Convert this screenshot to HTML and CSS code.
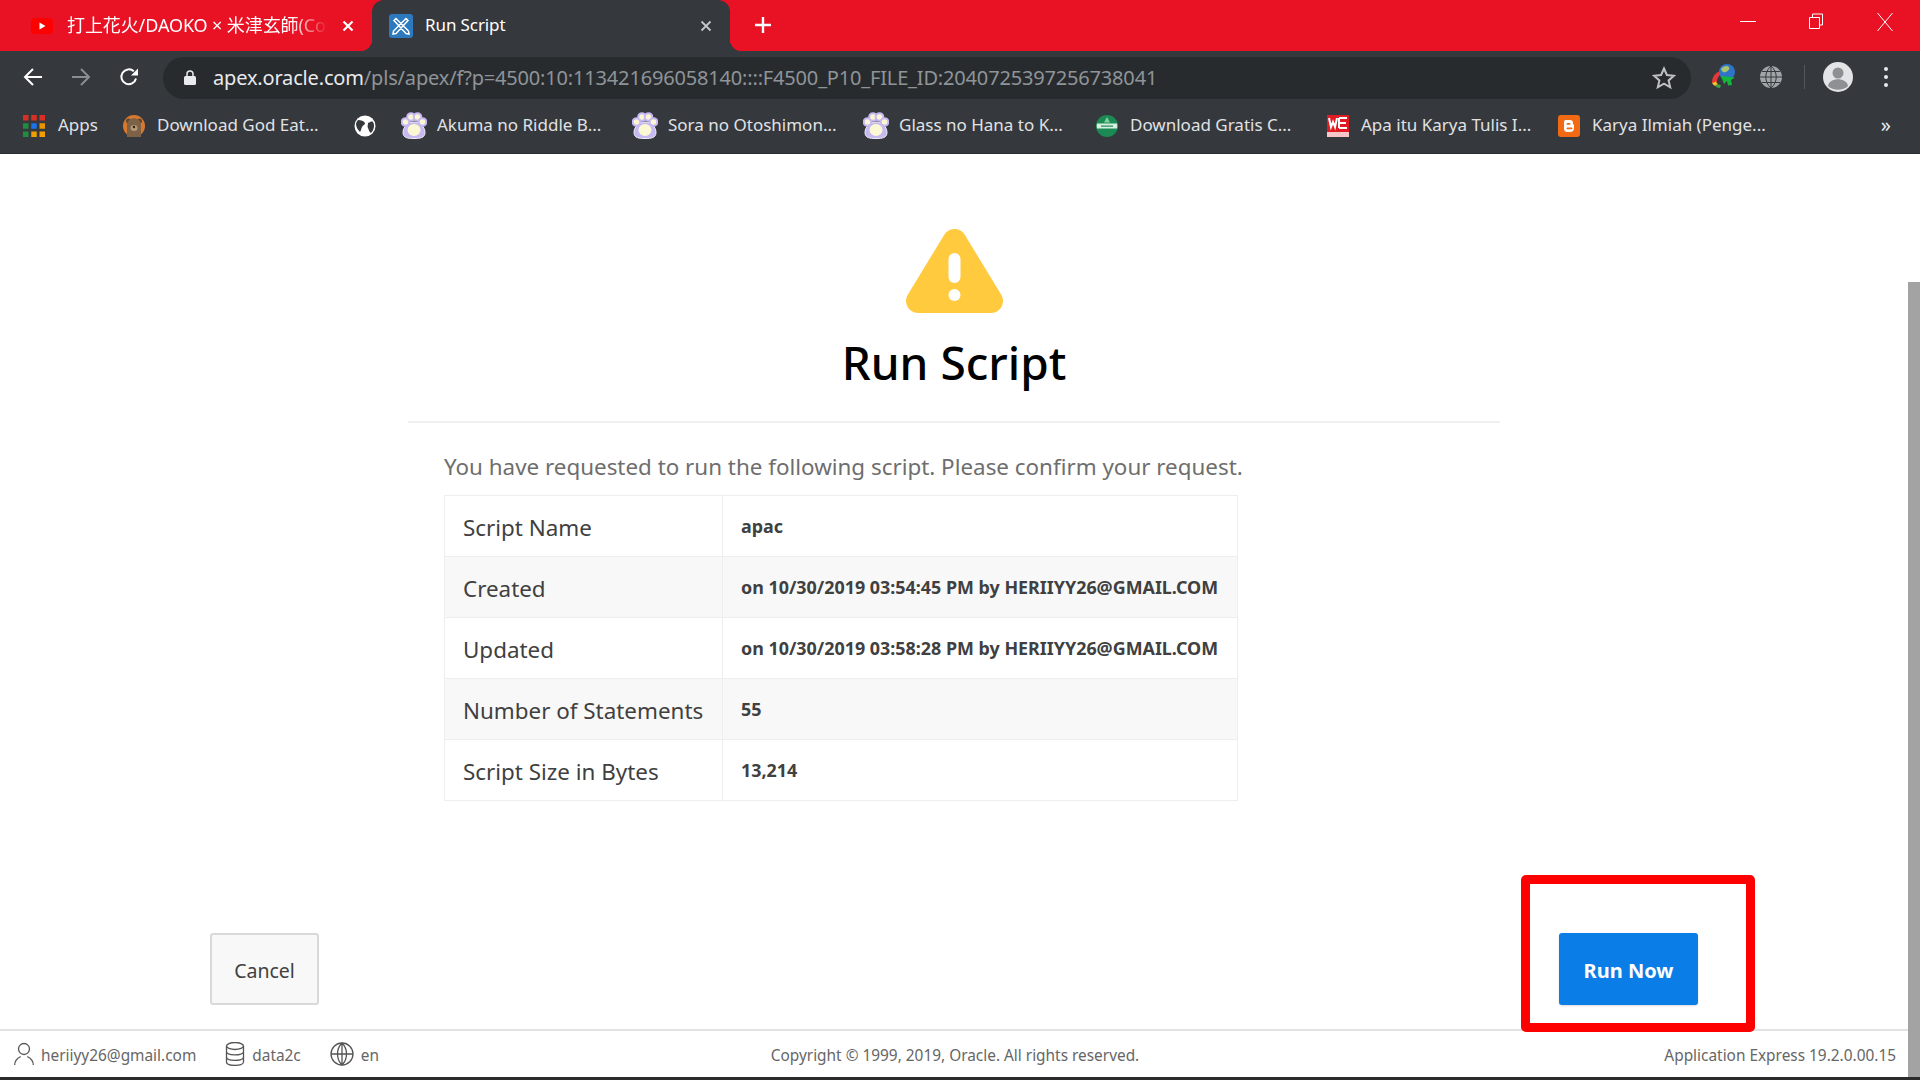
FILE: index.html
```html
<!DOCTYPE html>
<html lang="en">
<head>
<meta charset="utf-8">
<title>Run Script</title>
<link rel="stylesheet" href="styles.css">
</head>
<body>
<div class="window">
  <header class="tabbar">
    <div class="tab tab-idle">
      <svg class="fav-yt" viewBox="0 0 22 16"><rect width="22" height="16" rx="4" fill="#f00"/><path d="M8.500 4.500 14.500 8 8.500 11.500z" fill="#fff"/></svg>
      <span class="tab-title tab-title-fade">打上花火/DAOKO × 米津玄師(Cover)</span>
      <svg class="tab-x" viewBox="0 0 12 12"><path d="M1.500 1.500 10.500 10.500M10.500 1.500 1.500 10.500" stroke="#fff" stroke-width="2.200"/></svg>
    </div>
    <div class="tab tab-active">
      <svg class="fav-apex" viewBox="0 0 24 24"><rect width="24" height="24" rx="3" fill="#2c79bd"/><path d="M5 6.500 7 4.500 19.500 17 20 20 17 19.500zM19 6.500 17 4.500 4.500 17 4 20 7 19.500z" fill="none" stroke="#fff" stroke-width="1.500"/></svg>
      <span class="tab-title tab-title-small">Run Script</span>
      <svg class="tab-x" viewBox="0 0 12 12"><path d="M1.500 1.500 10.500 10.500M10.500 1.500 1.500 10.500" stroke="#c4c7ca" stroke-width="1.800"/></svg>
    </div>
    <svg class="new-tab" viewBox="0 0 18 18"><path d="M9 1v16M1 9h16" stroke="#fff" stroke-width="2.400"/></svg>
    <div class="win-controls">
      <svg class="win-min" viewBox="0 0 16 16"><path d="M0 8.500h16" stroke="#fff"/></svg>
      <svg class="win-max" viewBox="0 0 16 16"><path d="M1.500 4.500h10v11h-10zM4.500 4.500v-3.500h10v11h-3" fill="none" stroke="#fff"/></svg>
      <svg class="win-close" viewBox="0 0 16 20"><path d="M.5 1 15.500 19M15.500 1 .5 19" stroke="#fff" fill="none"/></svg>
    </div>
  </header>

  <nav class="toolbar">
    <svg class="nav-icon" viewBox="0 0 20 20"><path d="M19 10H2M10 2 2 10l8 8" fill="none" stroke="#fff" stroke-width="2"/></svg>
    <svg class="nav-icon" viewBox="0 0 20 20"><path d="M1 10h17M10 2l8 8-8 8" fill="none" stroke="#8b8e91" stroke-width="2"/></svg>
    <svg class="nav-icon" viewBox="0 0 20 20"><path d="M17 11.500A7.400 7.400 0 1 1 14.800 4.300" fill="none" stroke="#fff" stroke-width="2"/><path d="M12 8.500h7v-7z" fill="#fff"/></svg>
    <div class="omnibox">
      <svg class="lock" viewBox="0 0 12 15"><path d="M3 6V4a3 3 0 0 1 6 0v2" fill="none" stroke="#e8eaed" stroke-width="1.500"/><rect y="6" width="12" height="9" rx="1.500" fill="#e8eaed"/></svg>
      <span class="url"><span class="url-host">apex.oracle.com</span>/pls/apex/f?p=4500:10:113421696058140::::F4500_P10_FILE_ID:2040725397256738041</span>
      <svg class="star" viewBox="0 0 24 24"><path d="M12 2.500l2.900 6.500 7 .7-5.300 4.700 1.600 6.900-6.200-3.600-6.200 3.600 1.600-6.900L2.100 9.700l7-.7z" fill="none" stroke="#bfc1c3" stroke-width="2"/></svg>
    </div>
    <svg class="ext-idm" viewBox="0 0 26 26">
      <path d="M1 19C1 12 5 8 10 7l1 3c-3 1-5 4-5 8z" fill="#e53935"/>
      <path d="M4 22C2.500 21 1.500 20 1 19l4-1.500c.4 1 1 2 2 2.500z" fill="#fbc02d"/>
      <path d="M9 24c-2 0-4-1-5-2l3-2c1 .8 2 1 3 1z" fill="#43a047"/>
      <circle cx="16" cy="8" r="8" fill="#2f74c9"/>
      <path d="M10 5c2-3 6-4 8-2 1 2-1 4-3 5s-4 0-5-3z" fill="#a9c46c"/>
      <path d="M10 12 24 13.500 20 16l1 5-4 .5-1-4.500-3 3z" fill="#16b53c"/>
    </svg>
    <svg class="ext-globe" viewBox="0 0 24 24"><circle cx="12" cy="12" r="11" fill="#a2a5a8"/><path d="M1 12h22M3 6.500h18M3 17.500h18M12 1v22M12 1c-7 6-7 16 0 22M12 1c7 6 7 16 0 22" fill="none" stroke="#35383c" stroke-width="1"/></svg>
    <span class="tool-sep"></span>
    <svg class="avatar" viewBox="0 0 30 30"><circle cx="15" cy="15" r="15" fill="#e3e4e5"/><circle cx="15" cy="11" r="5.500" fill="#8e9093"/><path d="M5 24c1-9 19-9 20 0-5 5-15 5-20 0z" fill="#8e9093"/></svg>
    <svg class="kebab" viewBox="0 0 6 22"><circle cx="3" cy="3" r="2" fill="#e8eaed"/><circle cx="3" cy="11" r="2" fill="#e8eaed"/><circle cx="3" cy="19" r="2" fill="#e8eaed"/></svg>
  </nav>

  <nav class="bookmarks">
    <div class="bm bm-apps">
      <svg class="bm-icon" viewBox="0 0 20 20"><g fill="#d93025"><rect width="5" height="5"/><rect x="7.500" width="5" height="5"/><rect x="15" width="5" height="5"/></g><rect y="7.500" width="5" height="5" fill="#1e8e3e"/><rect x="7.500" y="7.500" width="5" height="5" fill="#1a73e8"/><rect x="15" y="7.500" width="5" height="5" fill="#e69500"/><rect y="15" width="5" height="5" fill="#1e8e3e"/><rect x="7.500" y="15" width="5" height="5" fill="#f09d00"/><rect x="15" y="15" width="5" height="5" fill="#f09d00"/></svg>
      <span>Apps</span>
    </div>
    <div class="bm">
      <svg class="bm-icon" viewBox="0 0 22 22"><circle cx="11" cy="11" r="11" fill="#d9782f"/><circle cx="5.500" cy="6" r="2.500" fill="#5d4632"/><circle cx="16.500" cy="6" r="2.500" fill="#5d4632"/><path d="M4 10c0-9 14-9 14 0v12H4z" fill="#7d6248"/><ellipse cx="11" cy="13" rx="3.500" ry="3" fill="#b69a78"/><circle cx="11" cy="12" r="1.200" fill="#2c2118"/></svg>
      <span>Download God Eat...</span>
    </div>
    <div class="bm bm-globe">
      <svg class="bm-icon" viewBox="0 0 22 22"><circle cx="11" cy="11" r="10.500" fill="#fff"/><path d="M4 5c3 0 6 1 7 3 0 2-2 2-3 4s-1 4-2 5c-2-2-4-5-4-8 0-1 1-3 2-4zM14 8c2-1 4-2 5-1 2 3 1 8-2 11-2-1-2-3-3-5-1-1 0-3 0-5z" fill="#35383c"/></svg>
    </div>
    <div class="bm bm-paw">
      <svg class="bm-icon" viewBox="0 0 26 27"><use href="#paw"/></svg>
      <span>Akuma no Riddle B...</span>
    </div>
    <div class="bm bm-paw">
      <svg class="bm-icon" viewBox="0 0 26 27"><use href="#paw"/></svg>
      <span>Sora no Otoshimon...</span>
    </div>
    <div class="bm bm-paw">
      <svg class="bm-icon" viewBox="0 0 26 27"><use href="#paw"/></svg>
      <span>Glass no Hana to K...</span>
    </div>
    <div class="bm">
      <svg class="bm-icon" viewBox="0 0 22 22"><circle cx="11" cy="11" r="11" fill="#1b8a55"/><path d="M1 8.500h20a11 11 0 0 1 0 5H1a11 11 0 0 1 0-5z" fill="#d8efe0"/><path d="M5 10.500h12v1.200H5z" fill="#1b8a55"/><path d="M11 2l3 5.500H8z" fill="#7fd09f"/></svg>
      <span>Download Gratis C...</span>
    </div>
    <div class="bm">
      <svg class="bm-icon" viewBox="0 0 22 22"><rect width="22" height="22" fill="#e01b24"/><path d="M2 3l2 9 2-5 2 5 2-9M12 3h8M12 8h7M12 13h8M12 3v10" fill="none" stroke="#fff" stroke-width="2"/><rect y="17" width="22" height="5" fill="#f6c6c8"/></svg>
      <span>Apa itu Karya Tulis I...</span>
    </div>
    <div class="bm">
      <svg class="bm-icon" viewBox="0 0 22 22"><rect width="22" height="22" rx="3" fill="#f26a13"/><path d="M7.500 5h4.500a3 3 0 0 1 3 3v1l1 1v3a4 4 0 0 1-4 4H9.500a3.500 3.500 0 0 1-3.500-3.500V7a2 2 0 0 1 1.500-2z" fill="#fff"/><rect x="8.500" y="8" width="4" height="1.800" rx=".9" fill="#f26a13"/><rect x="8.500" y="12.500" width="6" height="1.800" rx=".9" fill="#f26a13"/></svg>
      <span>Karya Ilmiah (Penge...</span>
    </div>
    <span class="bm-more">»</span>
  </nav>

  <svg class="defs" width="0" height="0"><defs><g id="paw">
    <path d="M13 10c6 0 11 5 11 10.500S19 26.500 13 26.500 2 26 2 20.500 7 10 13 10z" fill="#c6b8f0" stroke="#f4f1fb" stroke-width="1"/>
    <circle cx="4.500" cy="10" r="3.800" fill="#fbf6d3" stroke="#c6b8f0" stroke-width="2"/>
    <circle cx="10" cy="5" r="3.800" fill="#fbf6d3" stroke="#c6b8f0" stroke-width="2"/>
    <circle cx="16.500" cy="5" r="3.800" fill="#fbf6d3" stroke="#c6b8f0" stroke-width="2"/>
    <circle cx="21.500" cy="10" r="3.800" fill="#fbf6d3" stroke="#c6b8f0" stroke-width="2"/>
    <ellipse cx="13" cy="18" rx="6.500" ry="6" fill="#fdf8d4"/>
  </g></defs></svg>

  <div class="page">
    <div class="content">
      <main class="main">
        <div class="hero">
          <svg class="warn" viewBox="0 0 97 84"><path d="M48.500 12 12 72H85z" fill="#ffca3e" stroke="#ffca3e" stroke-width="24" stroke-linejoin="round"/><rect x="42.500" y="24" width="12" height="30" rx="6" fill="#fff"/><circle cx="48.500" cy="66" r="6" fill="#fff"/></svg>
          <h1 class="title">Run Script</h1>
        </div>
        <div class="body">
          <p class="intro">You have requested to run the following script. Please confirm your request.</p>
          <table class="info">
            <tr><th>Script Name</th><td>apac</td></tr>
            <tr class="alt"><th>Created</th><td>on 10/30/2019 03:54:45 PM by HERIIYY26@GMAIL.COM</td></tr>
            <tr><th>Updated</th><td>on 10/30/2019 03:58:28 PM by HERIIYY26@GMAIL.COM</td></tr>
            <tr class="alt"><th>Number of Statements</th><td>55</td></tr>
            <tr><th>Script Size in Bytes</th><td>13,214</td></tr>
          </table>
        </div>
        <div class="actions">
          <button class="btn btn-cancel">Cancel</button>
          <div class="run-wrap">
            <button class="btn btn-run">Run Now</button>
            <span class="highlight"></span>
          </div>
        </div>
      </main>
      <footer class="footer">
        <div class="foot-left">
          <span class="foot-item"><svg class="foot-icon" viewBox="0 0 20 24"><circle cx="10" cy="7" r="5.500" fill="none" stroke="#555" stroke-width="1.300"/><path d="M.7 23c0-5 3-7 6-8.500M19.300 23c0-5-3-7-6-8.500" fill="none" stroke="#555" stroke-width="1.300"/></svg>heriiyy26@gmail.com</span>
          <span class="foot-item"><svg class="foot-icon" viewBox="0 0 20 24"><ellipse cx="10" cy="4" rx="8.500" ry="3.500" fill="none" stroke="#555" stroke-width="1.300"/><path d="M1.500 4v16c0 4.500 17 4.500 17 0V4M1.500 9.500c0 4.500 17 4.500 17 0M1.500 15c0 4.500 17 4.500 17 0" fill="none" stroke="#555" stroke-width="1.300"/></svg>data2c</span>
          <span class="foot-item"><svg class="foot-icon foot-globe" viewBox="0 0 24 24"><circle cx="12" cy="12" r="11" fill="none" stroke="#555" stroke-width="1.300"/><path d="M1 12h22M12 1c-6 6-6 16 0 22M12 1c6 6 6 16 0 22M12 1v22" fill="none" stroke="#555" stroke-width="1.300"/></svg>en</span>
        </div>
        <div class="foot-center">Copyright © 1999, 2019, Oracle. All rights reserved.</div>
        <div class="foot-right">Application Express 19.2.0.00.15</div>
      </footer>
    </div>
    <div class="scrolltrack"><div class="scrollthumb"></div></div>
  </div>
  <div class="taskstrip"></div>
</div>
</body>
</html>
```

FILE: styles.css
```css
* { box-sizing: border-box; }
html, body { margin: 0; height: 100%; }
body { font-family: "Noto Sans", "Open Sans", "Noto Sans CJK JP", sans-serif; overflow: hidden; background: #fff; }
.window { height: 1080px; display: flex; flex-direction: column; }

/* tab strip */
.tabbar { height: 51px; flex: none; background: #e91124; display: flex; align-items: stretch; color: #fff; }
.tab { display: flex; align-items: center; font-size: 18px; position: relative; }
.tab-idle { width: 372px; padding-left: 31px; }
.tab-active { width: 358px; padding-left: 17px; background: #35383c; border-radius: 12px 12px 0 0; }
.tab-active::before, .tab-active::after { content: ""; position: absolute; bottom: 0; width: 12px; height: 12px; }
.tab-active::before { left: -12px; background: radial-gradient(circle at 0 0, transparent 12px, #35383c 12.5px); }
.tab-active::after { right: -12px; background: radial-gradient(circle at 100% 0, transparent 12px, #35383c 12.5px); }
.fav-yt { width: 22px; height: 16px; flex: none; margin-right: 14px; }
.fav-apex { width: 24px; height: 24px; flex: none; margin-right: 12px; }
.tab-title { flex: 1; white-space: nowrap; overflow: hidden; letter-spacing: -.1px; margin-top: -3px; }
.tab-title-small { font-size: 17px; }
.tab-title-fade { -webkit-mask-image: linear-gradient(90deg, #000 86%, transparent 100%); mask-image: linear-gradient(90deg, #000 86%, transparent 100%); }
.tab-x { width: 12px; height: 12px; flex: none; margin: 0 18px 0 14px; }
.new-tab { width: 18px; height: 18px; align-self: center; margin-left: 24px; margin-top: -1px; }
.win-controls { margin-left: auto; display: flex; align-items: flex-start; gap: 52px; padding: 13px 27px 0 0; }
.win-controls svg { width: 16px; height: 16px; display: block; }
.win-controls .win-close { height: 20px; margin-top: -1px; margin-left: 1px; }

/* toolbar */
.toolbar { height: 51px; flex: none; background: #35383c; display: flex; align-items: center; padding: 0 0 0 23px; }
.nav-icon { width: 20px; height: 20px; margin-right: 28px; flex: none; }
.nav-icon:nth-child(3) { margin-right: 24px; }
.omnibox { width: 1528px; height: 42px; margin-top: 5px; background: #282b2e; border-radius: 21px; display: flex; align-items: center; padding: 0 15px 0 21px; margin-bottom: 3px; }
.lock { width: 12px; height: 15px; flex: none; margin-right: 17px; }
.url { flex: 1; font-size: 20px; letter-spacing: -.17px; color: #8f9499; white-space: nowrap; overflow: hidden; }
.url-host { color: #e8eaed; }
.star { width: 24px; height: 24px; flex: none; }
.ext-idm { width: 26px; height: 26px; flex: none; margin-left: 20px; }
.ext-globe { width: 24px; height: 24px; flex: none; margin-left: 22px; }
.tool-sep { width: 1px; height: 24px; background: #55585b; margin-left: 21px; flex: none; }
.avatar { width: 30px; height: 30px; flex: none; margin-left: 18px; }
.kebab { width: 6px; height: 22px; flex: none; margin-left: 30px; }

/* bookmarks */
.bookmarks { height: 52px; flex: none; background: #35383c; border-bottom: 1px solid #2a2c2f; display: flex; align-items: center; padding: 0 0 4px 23px; font-size: 17px; color: #e0e2e5; }
.bm { width: 231px; flex: none; display: flex; align-items: center; gap: 12px; white-space: nowrap; }
.bm span { margin-top: -2px; }
.bm-apps { width: 100px; gap: 13px; }
.bm-globe { width: 49px; }
.bm-paw { gap: 10px; }
.bm-icon { width: 22px; height: 24px; flex: none; display: block; }
.bm-paw .bm-icon { width: 26px; height: 27px; margin-left: -2px; }
.bm-more { margin-left: auto; margin-right: 29px; color: #e8eaed; font-size: 20px; margin-top: -3px; }
.defs { position: absolute; }

/* page */
.page { flex: 1; min-height: 0; display: flex; }
.content { flex: 1; min-width: 0; display: flex; flex-direction: column; }
.main { flex: 1; min-height: 0; display: flex; flex-direction: column; }
.hero { width: 1092px; margin: 0 auto; padding-top: 75px; height: 269px; border-bottom: 2px solid #f0f0f0; display: flex; flex-direction: column; align-items: center; }
.warn { width: 97px; height: 84px; flex: none; }
.title { margin: 17px 0 0; font-size: 46px; line-height: 64px; font-weight: 500; color: #000; }
.body { width: 1092px; margin: 0 auto; padding: 26px 36px 0; }
.intro { margin: 0 0 10px; font-size: 22.400px; line-height: 36px; color: #6e6e6e; }
.info { width: 794px; border-collapse: collapse; table-layout: fixed; }
.info th, .info td { height: 61px; border: 1px solid #eee; padding: 0 18px; text-align: left; vertical-align: middle; white-space: nowrap; }
.info th { width: 278px; font-weight: 400; font-size: 22.400px; color: #404040; padding-top: 2px; }
.info td { font-weight: 700; font-size: 17.900px; color: #404040; }
.info .alt th, .info .alt td { background: #f8f8f8; }
.actions { margin-top: auto; display: flex; justify-content: space-between; padding: 0 210px 24px; }
.btn { height: 72px; font-family: inherit; font-size: 20px; border-radius: 3px; display: block; padding-top: 4px; }
.btn-cancel { width: 109px; font-size: 19.500px; background: #f8f8f8; border: 2px solid #d9d9d9; color: #404040; }
.btn-run { width: 139px; background: #0a7de6; border: none; color: #fff; font-weight: 700; box-shadow: 0 1px 2px rgba(0,0,0,.15); }
.run-wrap { position: relative; }
.highlight { position: absolute; top: -58px; left: -38px; right: -57px; bottom: -27px; border: 9px solid #f00; border-radius: 5px; pointer-events: none; }

/* footer */
.footer { height: 48px; flex: none; border-top: 2px solid #e2e2e2; display: grid; grid-template-columns: 1fr auto 1fr; align-items: center; padding: 3px 12px 0 14px; font-size: 15.400px; color: #666; background: #fff; }
.foot-left { display: flex; align-items: center; gap: 29px; }
.foot-item { display: flex; align-items: center; gap: 7px; }
.foot-icon { width: 20px; height: 24px; flex: none; margin-top: -3px; }
.foot-globe { width: 24px; }
.foot-right { text-align: right; }

/* scrollbar + taskbar edge */
.scrolltrack { width: 12px; flex: none; background: #fff; display: flex; flex-direction: column; }
.scrollthumb { flex: 1; margin-top: 128px; background: #a3a3a3; }
.taskstrip { height: 3px; flex: none; background: #2b2b2b; }
```
